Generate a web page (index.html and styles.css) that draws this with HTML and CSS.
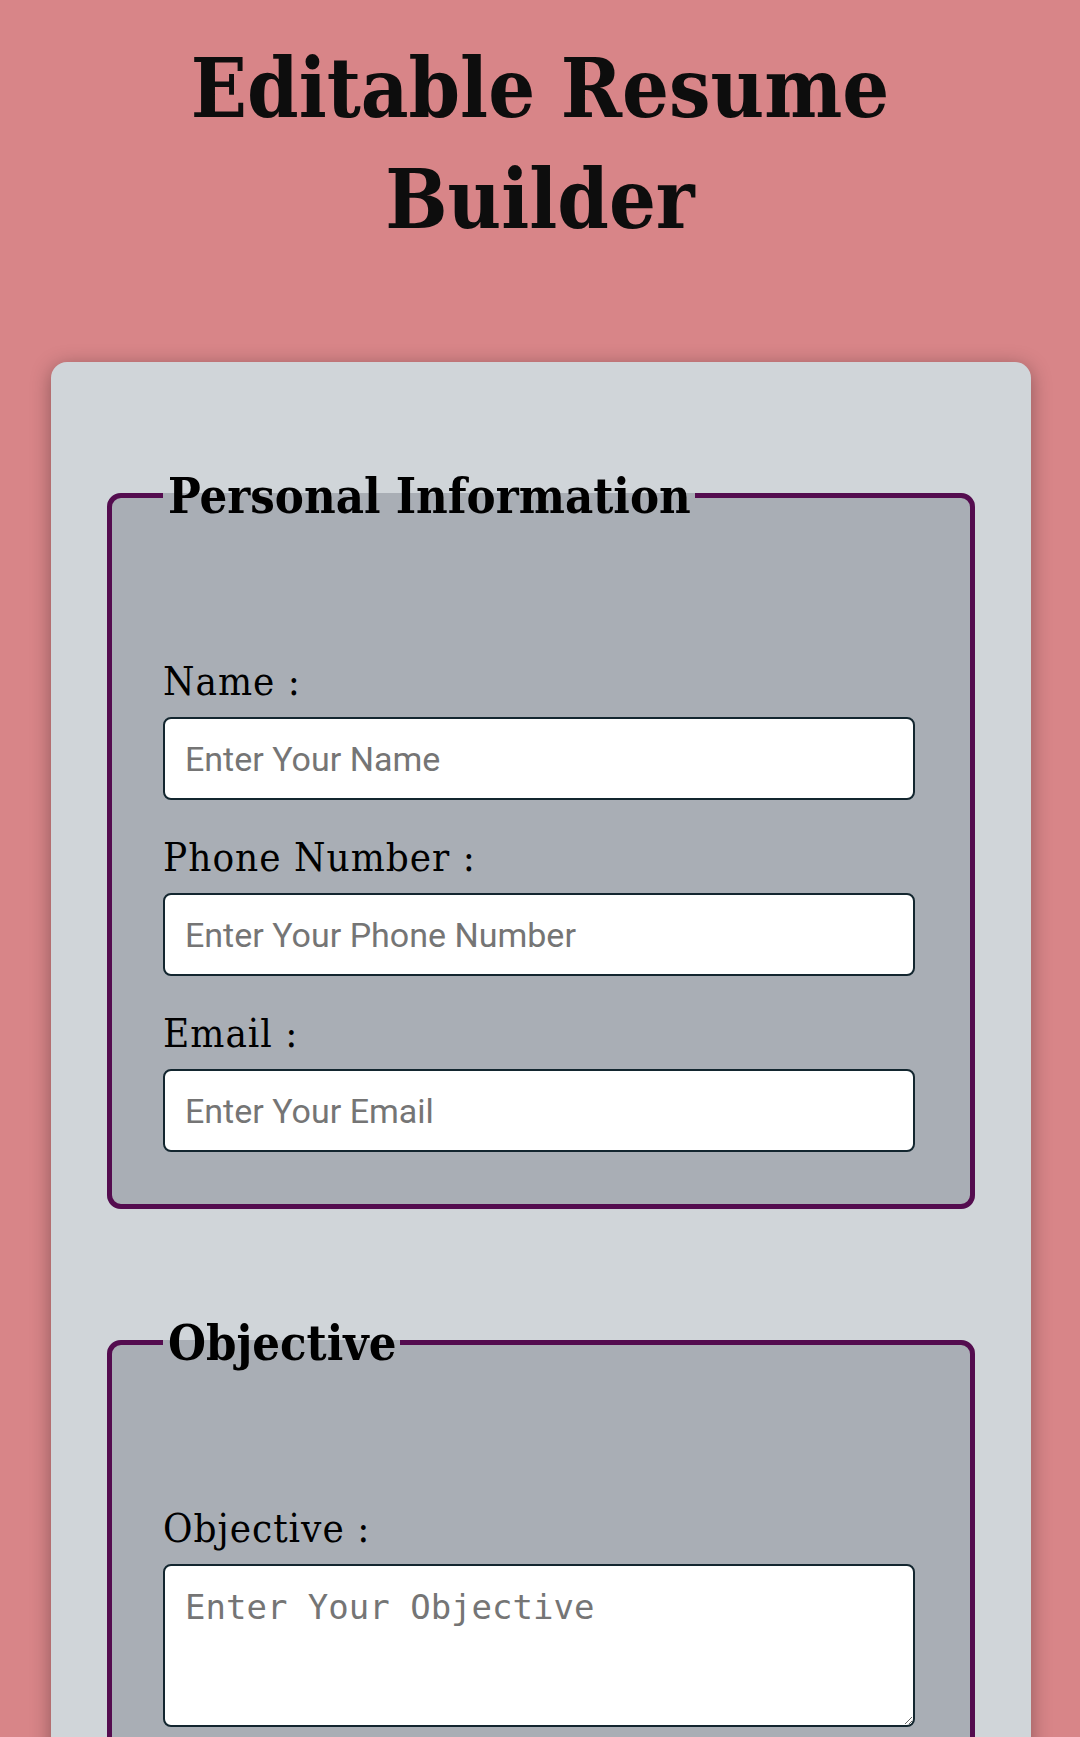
FILE: index.html
```html
<!DOCTYPE html>
<html lang="en">
<head>
  <meta charset="UTF-8">
  <meta name="viewport" content="width=device-width, initial-scale=1.0">
  <title>Editable Resume Builder</title>
  <link rel="stylesheet" href="styles.css">
</head>
<body>

  <h1 class="title">Editable Resume Builder</h1>

  <div class="container">
    <form id="resumeForm">
      <fieldset class="section">
        <legend>Personal Information</legend>

        <div class="field">
          <label for="name">Name :</label>
          <input type="text" id="name" placeholder="Enter Your Name">
        </div>
        <div class="field">
          <label for="phone">Phone Number :</label>
          <input type="tel" id="phone" placeholder="Enter Your Phone Number">
        </div>
        <div class="field">
          <label for="email">Email :</label>
          <input type="email" id="email" placeholder="Enter Your Email">
        </div>
      </fieldset>

      <fieldset class="section">
        <legend>Objective</legend>

        <div class="field">
          <label for="objective">Objective :</label>
          <textarea id="objective" placeholder="Enter Your Objective"></textarea>
        </div>
      </fieldset>
    </form>
  </div>

</body>
</html>
```

FILE: styles.css
```css
body {
  margin: 0;
  background-color: #d88588;
  font-family: "DejaVu Serif Condensed", "DejaVu Serif", serif;
  color: #000;
}

.title {
  max-width: 820px;
  margin: 33px auto 107px;
  text-align: center;
  font-size: 82px;
  line-height: 111px;
  font-weight: bold;
  color: #0d0d0d;
}

.container {
  margin: 0 49px 0 51px;
  padding: 105px 56px 60px;
  background-color: #d0d5d9;
  border-radius: 16px;
  box-shadow: 0 4px 20px rgba(0, 0, 0, 0.35);
}

.section {
  margin: 0 0 105px;
  padding: 100px 55px 52px 51px;
  background-color: #a9aeb5;
  border: 5px solid #540c4f;
  border-radius: 14px;
}

.section legend {
  padding: 0 4px 0 5px;
  font-size: 48.5px;
  font-weight: bold;
}

.field {
  margin-top: 34px;
}

.field label {
  display: block;
  margin-bottom: 13px;
  font-size: 40px;
  letter-spacing: 1px;
}

.field input,
.field textarea {
  display: block;
  box-sizing: border-box;
  width: 100%;
  border: 2px solid #13262f;
  border-radius: 8px;
  background-color: #fff;
  color: #000;
}

.field input {
  height: 83px;
  padding: 0 20px;
  font-family: Roboto, sans-serif;
  font-size: 34px;
}

.field textarea {
  height: 163px;
  margin-top: 2px;
  padding: 21px 20px;
  font-family: "DejaVu Sans Mono", monospace;
  font-size: 34px;
}

.field input::placeholder,
.field textarea::placeholder {
  color: #757575;
}
```
